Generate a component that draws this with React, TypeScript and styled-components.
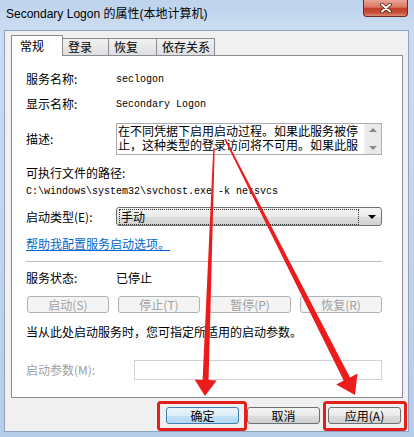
import styled, { createGlobalStyle } from 'styled-components'

const Global = createGlobalStyle`
  html, body { margin: 0; padding: 0; background: #fff; }
  body { font-family: "Noto Sans CJK SC", sans-serif; }
`

const Window = styled.div`
  position: relative;
  width: 414px;
  height: 437px;
  display: flex;
  flex-direction: column;
  overflow: hidden;
  background: linear-gradient(180deg, #bdd3ec 0%, #cadcf1 28px, #bfd4ec 60%, #b7cde8 100%);
`

const TitleBar = styled.div`
  height: 30px;
  flex: none;
  display: flex;
  justify-content: space-between;
  align-items: flex-start;
  padding: 0 6px;
`

const Title = styled.div`
  margin-top: 7px;
  font-family: "Liberation Sans", "Noto Sans CJK SC", sans-serif;
  font-size: 12px;
  line-height: 14px;
  color: #000;
`

const CloseButton = styled.div`
  width: 45px;
  height: 17px;
  box-sizing: border-box;
  display: flex;
  align-items: center;
  justify-content: center;
  border: 1px solid #6e2a20;
  border-top: none;
  border-radius: 0 0 4px 4px;
  background: linear-gradient(180deg, #e8a697 0%, #d9765f 45%, #c3402a 52%, #c8523a 80%, #dc8b74 100%);
`

const Client = styled.div`
  flex: 1;
  display: flex;
  flex-direction: column;
  margin: 0 5px 5px 4px;
  padding: 4px 5px 7px 6px;
  border: 1px solid #8da3bf;
  background: #f0f0f0;
`

const TabStrip = styled.div`
  display: flex;
  align-items: flex-end;
  height: 21px;
  margin-bottom: -1px;
  position: relative;
  z-index: 1;
`

const Tab = styled.div<{ $active?: boolean; $w: number }>`
  box-sizing: border-box;
  width: ${p => p.$w}px;
  height: ${p => (p.$active ? 21 : 18)}px;
  margin-left: -1px;
  padding-left: ${p => (p.$active ? 8 : 5)}px;
  border: 1px solid #898c95;
  border-bottom: ${p => (p.$active ? 'none' : '1px solid #898c95')};
  background: ${p => (p.$active ? '#fff' : 'linear-gradient(180deg, #f2f2f2, #dedede)')};
  font-size: 12px;
  line-height: ${p => (p.$active ? 20 : 16)}px;
  color: #000;
  &:first-child { margin-left: 0; }
`

const Panel = styled.div`
  flex: 1;
  display: flex;
  flex-direction: column;
  padding: 14px 20px 0 14px;
  border: 1px solid #898c95;
  background: #fff;
  font-size: 12px;
  line-height: 14px;
  color: #000;
`

const Field = styled.div<{ $top?: number; $label?: number }>`
  display: grid;
  grid-template-columns: ${p => p.$label ?? 90}px 1fr;
  align-items: center;
  margin-top: ${p => p.$top ?? 0}px;
`

const Text = styled.div<{ $top?: number; $disabled?: boolean }>`
  margin-top: ${p => p.$top ?? 0}px;
  color: ${p => (p.$disabled ? '#a0a0a0' : '#000')};
  white-space: nowrap;
`

const Mono = styled.span`
  font-family: "Liberation Mono", monospace;
  font-size: 10px;
`

const DescBox = styled.div`
  display: flex;
  height: 32px;
  box-sizing: border-box;
  border: 1px solid #abadb3;
  background: #fff;
`

const DescText = styled.div`
  flex: 1;
  padding-left: 1px;
  white-space: nowrap;
`

const ScrollBar = styled.div`
  width: 16px;
  display: flex;
  flex-direction: column;
  justify-content: space-between;
  align-items: center;
  padding: 4px 0;
  background: #eaeaea;
  border-left: 1px solid #f4f4f4;
`

const ScrollArrow = styled.div<{ $down?: boolean }>`
  width: 0;
  height: 0;
  border-left: 4px solid transparent;
  border-right: 4px solid transparent;
  ${p => (p.$down ? 'border-top: 4px solid #8a8a8a;' : 'border-bottom: 4px solid #8a8a8a;')}
`

const Combo = styled.div`
  height: 19px;
  box-sizing: border-box;
  display: flex;
  align-items: center;
  padding: 0 5px 0 2px;
  border: 1px solid #707070;
  border-radius: 3px;
  background: linear-gradient(180deg, #f4f4f4 0%, #ebebeb 50%, #dddddd 51%, #d2d2d2 100%);
`

const ComboText = styled.div`
  flex: 1;
  height: 14px;
  padding-left: 1px;
  margin-right: 9px;
  border: 1px dotted #333;
  line-height: 14px;
`

const ComboArrow = styled.div`
  width: 0;
  height: 0;
  border-left: 4px solid transparent;
  border-right: 4px solid transparent;
  border-top: 4px solid #000;
`

const HelpLink = styled.a`
  margin-top: 11px;
  align-self: flex-start;
  color: #0066cc;
  text-decoration: underline;
  cursor: pointer;
`

const Separator = styled.div`
  margin-top: 10px;
  height: 1px;
  background: #bdbdbd;
`

const ServiceButtons = styled.div`
  margin: 11px 0 0 1px;
  display: grid;
  grid-template-columns: repeat(4, 1fr);
  gap: 9px;
`

const SmallButton = styled.div`
  height: 17px;
  box-sizing: border-box;
  border: 1px solid #adb2b5;
  border-radius: 3px;
  background: #f4f4f4;
  color: #a0a0a0;
  text-align: center;
  line-height: 15px;
`

const ParamInput = styled.div`
  height: 20px;
  box-sizing: border-box;
  border: 1px solid #d0d3d8;
  background: #fff;
`

const Footer = styled.div`
  display: flex;
  justify-content: flex-end;
  gap: 8px;
  margin: 9px 2px 0 0;
`

const DialogButton = styled.div<{ $default?: boolean }>`
  width: 73px;
  height: 17px;
  box-sizing: border-box;
  border: 1px solid ${p => (p.$default ? '#3c7fb1' : '#707070')};
  border-radius: 3px;
  background: ${p =>
    p.$default
      ? 'linear-gradient(180deg, #ecf6fd 0%, #dcedf9 50%, #c4e2f6 51%, #b2d8f2 100%)'
      : 'linear-gradient(180deg, #f4f4f4 0%, #ebebeb 50%, #dddddd 51%, #cfcfcf 100%)'};
  font-size: 12px;
  line-height: 15px;
  text-align: center;
  color: #000;
`

const Overlay = styled.svg`
  position: absolute;
  left: 0;
  top: 0;
  pointer-events: none;
  z-index: 5;
`

// tapered annotation arrow, tail at (x1,y1), tip at (x2,y2)
function arrow(x1: number, y1: number, x2: number, y2: number, w1: number, w2: number, hl: number, hw: number) {
  const len = Math.hypot(x2 - x1, y2 - y1)
  const ux = (x2 - x1) / len
  const uy = (y2 - y1) / len
  const px = -uy
  const py = ux
  const bx = x2 - ux * hl
  const by = y2 - uy * hl
  const pts = [
    [x1 + (px * w1) / 2, y1 + (py * w1) / 2],
    [bx + (px * w2) / 2, by + (py * w2) / 2],
    [bx + (px * hw) / 2, by + (py * hw) / 2],
    [x2, y2],
    [bx - (px * hw) / 2, by - (py * hw) / 2],
    [bx - (px * w2) / 2, by - (py * w2) / 2],
    [x1 - (px * w1) / 2, y1 - (py * w1) / 2],
  ]
  return pts.map(p => p.map(n => n.toFixed(1)).join(',')).join(' ')
}

// only the two lines visible in the box
const DESC_LINES = ['在不同凭据下启用启动过程。如果此服务被停', '止，这种类型的登录访问将不可用。如果此服']

export default function App() {
  return (
    <>
      <Global />
      <Window>
        <TitleBar>
          <Title>Secondary Logon 的属性(本地计算机)</Title>
          <CloseButton>
            <svg width="12" height="10" viewBox="0 0 12 10">
              <path d="M2 1.5 L10 8.5 M10 1.5 L2 8.5" stroke="#4a1a14" strokeWidth="3.6" strokeLinecap="round" />
              <path d="M2 1.5 L10 8.5 M10 1.5 L2 8.5" stroke="#fff" strokeWidth="2" strokeLinecap="round" />
            </svg>
          </CloseButton>
        </TitleBar>

        <Client>
          <TabStrip>
            <Tab $active $w={52}>常规</Tab>
            <Tab $w={47}>登录</Tab>
            <Tab $w={49}>恢复</Tab>
            <Tab $w={59}>依存关系</Tab>
          </TabStrip>

          <Panel>
            <Field>
              <Text>服务名称:</Text>
              <Text><Mono>seclogon</Mono></Text>
            </Field>
            <Field $top={8}>
              <Text>显示名称:</Text>
              <Text><Mono>Secondary Logon</Mono></Text>
            </Field>
            <Field $top={11}>
              <Text>描述:</Text>
              <DescBox>
                <DescText>
                  {DESC_LINES.map(l => (
                    <div key={l}>{l}</div>
                  ))}
                </DescText>
                <ScrollBar>
                  <ScrollArrow />
                  <ScrollArrow $down />
                </ScrollBar>
              </DescBox>
            </Field>
            <Text $top={11}>可执行文件的路径:</Text>
            <Text $top={2}><Mono>C:\windows\system32\svchost.exe -k netsvcs</Mono></Text>
            <Field $top={8}>
              <Text>启动类型(E):</Text>
              <Combo>
                <ComboText>手动</ComboText>
                <ComboArrow />
              </Combo>
            </Field>
            <HelpLink>帮助我配置服务启动选项。</HelpLink>
            <Separator />
            <Field $top={9}>
              <Text>服务状态:</Text>
              <Text>已停止</Text>
            </Field>
            <ServiceButtons>
              <SmallButton>启动(S)</SmallButton>
              <SmallButton>停止(T)</SmallButton>
              <SmallButton>暂停(P)</SmallButton>
              <SmallButton>恢复(R)</SmallButton>
            </ServiceButtons>
            <Text $top={12}>当从此处启动服务时，您可指定所适用的启动参数。</Text>
            <Field $top={21} $label={108}>
              <Text $disabled>启动参数(M):</Text>
              <ParamInput />
            </Field>
          </Panel>

          <Footer>
            <DialogButton $default>确定</DialogButton>
            <DialogButton>取消</DialogButton>
            <DialogButton>应用(A)</DialogButton>
          </Footer>
        </Client>

        <Overlay width="414" height="437" viewBox="0 0 414 437">
          <polygon points={arrow(214, 148, 205, 396, 1.5, 6, 16, 22)} fill="#ec1c1c" />
          <polygon points={arrow(225, 139, 355, 395, 1.5, 7, 18, 24)} fill="#ec1c1c" />
          <rect x="158.5" y="402.5" width="87" height="27" rx="2" fill="none" stroke="#e3201b" strokeWidth="3" />
          <rect x="324.5" y="402.5" width="81" height="27" rx="2" fill="none" stroke="#e3201b" strokeWidth="3" />
        </Overlay>
      </Window>
    </>
  )
}
